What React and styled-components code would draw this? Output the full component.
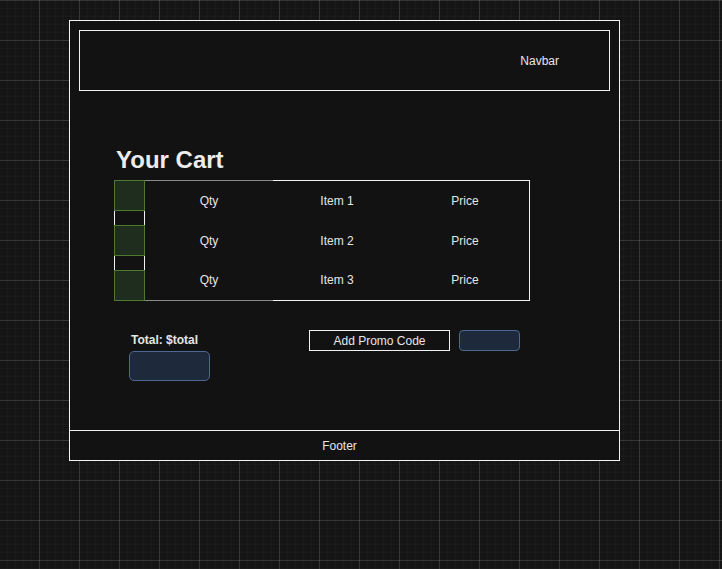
import styled, { createGlobalStyle } from "styled-components";

const GlobalStyle = createGlobalStyle`
  html, body {
    margin: 0;
    height: 100%;
  }
  body {
    font-family: "Liberation Sans", Arial, sans-serif;
    color: #e6e6e6;
    background-color: #151515;
    background-image:
      linear-gradient(to right, rgba(255, 255, 255, 0.12) 1px, transparent 1px),
      linear-gradient(to bottom, rgba(255, 255, 255, 0.12) 1px, transparent 1px),
      linear-gradient(to right, rgba(255, 255, 255, 0.018) 1px, transparent 1px),
      linear-gradient(to bottom, rgba(255, 255, 255, 0.018) 1px, transparent 1px);
    background-size: 40px 40px, 40px 40px, 8px 8px, 8px 8px;
    background-position: 39px 0, 0 0, 7px 0, 0 0;
  }
`;

const Page = styled.div`
  padding: 20px 0 0 69px;
`;

const Frame = styled.div`
  box-sizing: border-box;
  width: 551px;
  height: 441px;
  border: 1px solid #f2f2f2;
  background: #121212;
  display: flex;
  flex-direction: column;
`;

const Navbar = styled.div`
  box-sizing: border-box;
  height: 61px;
  margin: 9px 9px 0;
  border: 1px solid #f2f2f2;
  display: flex;
  align-items: center;
  justify-content: flex-end;
  padding-right: 50px;
  font-size: 12px;
`;

const Main = styled.main`
  flex: 1;
  padding: 55px 0 0 44px;
`;

const Title = styled.h1`
  margin: 0 0 6px;
  padding-left: 2px;
  font-size: 24px;
  line-height: 28px;
  font-weight: bold;
  color: #ececec;
`;

const CartTable = styled.div`
  display: flex;
  height: 121px;
  font-size: 12px;
`;

const ThumbStack = styled.div`
  box-sizing: border-box;
  width: 31px;
  border-left: 1px solid #f2f2f2;
  border-right: 1px solid #f2f2f2;
  display: flex;
  flex-direction: column;
  justify-content: space-between;
`;

const Thumb = styled.div`
  box-sizing: border-box;
  width: 31px;
  height: 31px;
  margin: 0 -1px;
  background: #1f2d1f;
  border: 1px solid #4c7a2c;
`;

const Column = styled.div`
  box-sizing: border-box;
  width: ${(p) => (p.$last ? 129 : 128)}px;
  border-top: 1px solid ${(p) => p.$line};
  border-bottom: 1px solid ${(p) => p.$line};
  border-right: ${(p) => (p.$last ? "1px solid #f2f2f2" : "none")};
  display: flex;
  flex-direction: column;
`;

const Cell = styled.div`
  flex: 1;
  display: flex;
  align-items: center;
  justify-content: center;
  line-height: 14px;
`;

const Summary = styled.div`
  display: flex;
  align-items: flex-start;
  margin-top: 29px;
  padding-left: 15px;
  font-size: 12px;
`;

const TotalBlock = styled.div`
  width: 180px;
  display: flex;
  flex-direction: column;
  gap: 4px;
`;

const TotalLabel = styled.div`
  margin-top: 3px;
  padding-left: 2px;
  font-weight: bold;
  line-height: 14px;
`;

const NavyButton = styled.button`
  box-sizing: border-box;
  width: ${(p) => p.$w}px;
  height: ${(p) => p.$h}px;
  padding: 0;
  background: #1e293b;
  border: 1px solid #4a6891;
  border-radius: ${(p) => p.$r}px;
`;

const PromoField = styled.div`
  box-sizing: border-box;
  width: 141px;
  height: 21px;
  margin-right: 9px;
  border: 1px solid #f2f2f2;
  display: flex;
  align-items: center;
  justify-content: center;
  line-height: 14px;
`;

const Footer = styled.footer`
  box-sizing: border-box;
  height: 30px;
  padding-right: 10px;
  border-top: 1px solid #f2f2f2;
  display: flex;
  align-items: center;
  justify-content: center;
  font-size: 12px;
`;

const items = ["Item 1", "Item 2", "Item 3"];

export default function App() {
  return (
    <>
      <GlobalStyle />
      <Page>
        <Frame>
          <Navbar>Navbar</Navbar>
          <Main>
            <Title>Your Cart</Title>
            <CartTable>
              <ThumbStack>
                {items.map((i) => (
                  <Thumb key={i} />
                ))}
              </ThumbStack>
              <Column $line="#8a8a8a">
                {items.map((i) => (
                  <Cell key={i}>Qty</Cell>
                ))}
              </Column>
              <Column $line="#f2f2f2">
                {items.map((i) => (
                  <Cell key={i}>{i}</Cell>
                ))}
              </Column>
              <Column $line="#f2f2f2" $last>
                {items.map((i) => (
                  <Cell key={i}>Price</Cell>
                ))}
              </Column>
            </CartTable>
            <Summary>
              <TotalBlock>
                <TotalLabel>Total: $total</TotalLabel>
                <NavyButton $w={81} $h={30} $r={5} />
              </TotalBlock>
              <PromoField>Add Promo Code</PromoField>
              <NavyButton $w={61} $h={21} $r={4} />
            </Summary>
          </Main>
          <Footer>Footer</Footer>
        </Frame>
      </Page>
    </>
  );
}
